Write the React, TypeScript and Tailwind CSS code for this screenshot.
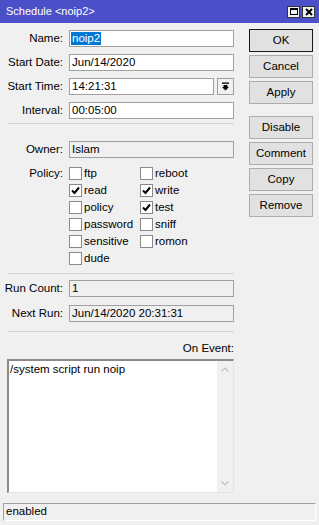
import React from "react";

const font = { fontFamily: '"Liberation Sans", Arial, sans-serif' };

function Field({ label, value, gray, children }: { label: string; value?: string; gray?: boolean; children?: React.ReactNode }) {
  return (
    <div className="flex items-center h-[17px]">
      <div className="w-[64px] text-right pr-[1px] whitespace-nowrap">{label}</div>
      <div className="ml-[5px] flex items-center">
        {children ?? (
          <div
            className={`w-[165px] h-[17px] border border-[#a0a0a0] flex items-center px-[2px] ${gray ? "bg-[#f0f0f0]" : "bg-white"}`}
          >
            {value}
          </div>
        )}
      </div>
    </div>
  );
}

function Check({ label, checked }: { label: string; checked?: boolean }) {
  return (
    <div className="flex items-center h-[17px]">
      <div className="w-[13px] h-[13px] border border-[#8a8a8a] bg-white flex items-center justify-center">
        {checked && (
          <svg width="9" height="9" viewBox="0 0 9 9">
            <path d="M1 4.5 L3.5 7 L8 1.5" stroke="#000" strokeWidth="2" fill="none" />
          </svg>
        )}
      </div>
      <span className="ml-[2px]">{label}</span>
    </div>
  );
}

function Btn({ label, def }: { label: string; def?: boolean }) {
  return (
    <div
      className={`w-[64px] h-[23px] flex items-center justify-center bg-[#e1e1e1] border ${def ? "border-[#1a1a1a]" : "border-[#adadad]"}`}
    >
      {label}
    </div>
  );
}

function Sep() {
  return <div className="ml-[8px] w-[226px] h-[1px] bg-[#d5d5d5]" />;
}

export default function App() {
  return (
    <div className="w-[319px] h-[525px] bg-[#f0f0f0] text-[11.5px] text-black flex flex-col overflow-hidden" style={font}>
      {/* title bar */}
      <div className="h-[23px] bg-[#4c50c8] flex items-center pl-[6px] pr-[4px] shrink-0">
        <span className="text-white text-[11px] flex-1">Schedule &lt;noip2&gt;</span>
        <div className="flex gap-[2px]">
          <div className="w-[13px] h-[12px] bg-[#f0f0f0] border border-[#333] flex items-center justify-center">
            <div className="w-[8px] h-[7px] border border-black border-t-2" />
          </div>
          <div className="w-[13px] h-[12px] bg-[#f0f0f0] border border-[#333] flex items-center justify-center">
            <svg width="8" height="8" viewBox="0 0 8 8">
              <path d="M1 1 L7 7 M7 1 L1 7" stroke="#000" strokeWidth="2" />
            </svg>
          </div>
        </div>
      </div>

      <div className="flex flex-1">
        {/* left */}
        <div className="w-[240px] flex flex-col">
          <div className="flex flex-col gap-[7px] pt-[7px]">
            <Field label="Name:">
              <div className="w-[165px] h-[17px] border border-[#a0a0a0] bg-white flex items-center px-[1px]">
                <span className="bg-[#0078d7] text-white px-[1px] leading-[13px]">noip2</span>
              </div>
            </Field>
            <Field label="Start Date:" value="Jun/14/2020" />
            <Field label="Start Time:">
              <div className="flex items-center">
                <div className="w-[145px] h-[17px] border border-[#a0a0a0] bg-white flex items-center px-[2px]">14:21:31</div>
                <div className="ml-[3px] w-[17px] h-[17px] border border-[#a0a0a0] bg-[#f0f0f0] flex items-center justify-center">
                  <svg width="9" height="9" viewBox="0 0 9 9">
                    <rect x="1" y="0.5" width="7" height="1.3" fill="#000" />
                    <path d="M2.5 3 L6.5 3 L6.5 5 L8 5 L4.5 8.5 L1 5 L2.5 5 Z" fill="#000" />
                  </svg>
                </div>
              </div>
            </Field>
            <Field label="Interval:" value="00:05:00" />
          </div>
          <div className="mt-[4px]">
            <Sep />
          </div>
          <div className="mt-[17px]">
            <Field label="Owner:" value="Islam" gray />
          </div>
          <div className="flex mt-[7px]">
            <div className="w-[64px] text-right pr-[1px] h-[17px] leading-[17px]">Policy:</div>
            <div className="ml-[5px] grid grid-cols-[71px_80px]">
              <Check label="ftp" />
              <Check label="reboot" />
              <Check label="read" checked />
              <Check label="write" checked />
              <Check label="policy" />
              <Check label="test" checked />
              <Check label="password" />
              <Check label="sniff" />
              <Check label="sensitive" />
              <Check label="romon" />
              <Check label="dude" />
            </div>
          </div>
          <div className="mt-[6px]">
            <Sep />
          </div>
          <div className="flex flex-col gap-[8px] mt-[6px]">
            <Field label="Run Count:" value="1" gray />
            <Field label="Next Run:" value="Jun/14/2020 20:31:31" gray />
          </div>
          <div className="mt-[9px]">
            <Sep />
          </div>
          <div className="mt-[10px] w-[234px] text-right leading-[13px]">On Event:</div>
          <div className="mt-[4px] ml-[7px] w-[227px] h-[134px] border-t-2 border-l-2 border-t-[#8a8a8a] border-l-[#8a8a8a] border-r border-b border-r-[#e3e3e3] border-b-[#e3e3e3] bg-white flex">
            <div className="flex-1 pl-[1px] pt-[1px] leading-[14px]">/system script run noip</div>
            <div className="w-[16px] bg-[#f0f0f0] flex flex-col items-center justify-between py-[6px]">
              <svg width="8" height="5" viewBox="0 0 8 5">
                <path d="M0.5 4.5 L4 1 L7.5 4.5" stroke="#c0c0c0" strokeWidth="1.2" fill="none" />
              </svg>
              <svg width="8" height="5" viewBox="0 0 8 5">
                <path d="M0.5 0.5 L4 4 L7.5 0.5" stroke="#c0c0c0" strokeWidth="1.2" fill="none" />
              </svg>
            </div>
          </div>
        </div>

        {/* right buttons */}
        <div className="flex flex-col pl-[9px] pt-[6px] gap-[3px]">
          <Btn label="OK" def />
          <Btn label="Cancel" />
          <Btn label="Apply" />
          <div className="h-[6px]" />
          <Btn label="Disable" />
          <Btn label="Comment" />
          <Btn label="Copy" />
          <Btn label="Remove" />
        </div>
      </div>

      {/* status bar */}
      <div className="mx-[3px] mb-[4px] h-[18px] border-t border-l border-[#a0a0a0] border-r border-r-[#ffffff] border-b border-b-[#ffffff] flex items-center pl-[2px] shrink-0">
        enabled
      </div>
    </div>
  );
}
